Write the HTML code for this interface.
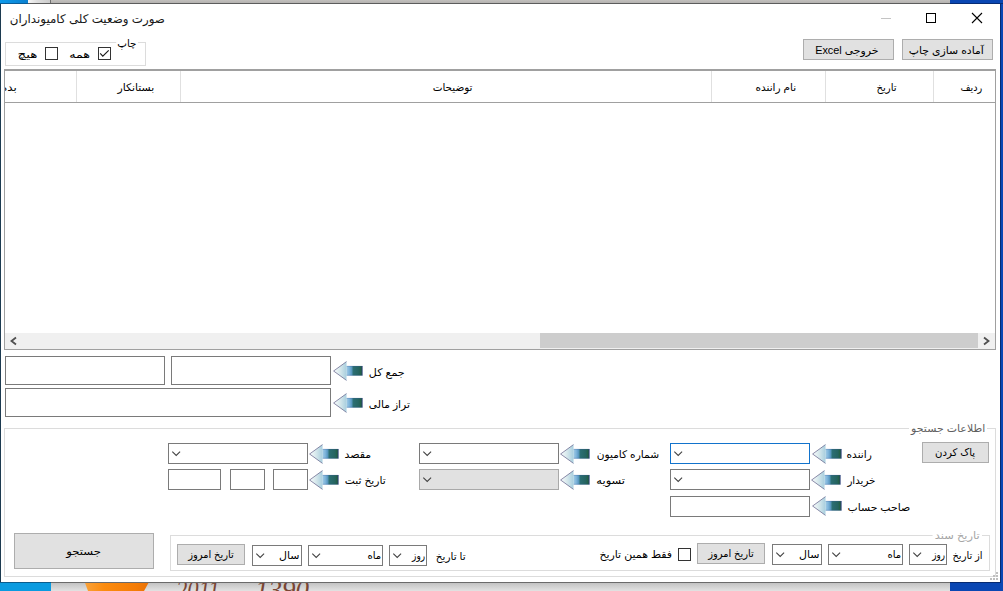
<!DOCTYPE html>
<html lang="fa">
<head>
<meta charset="utf-8">
<title>صورت وضعیت کلی کامیونداران</title>
<style>
html,body{margin:0;padding:0;}
body{width:1003px;height:591px;overflow:hidden;position:relative;background:#0a47b3;font-family:"Liberation Sans","DejaVu Sans",sans-serif;font-size:10.4px;color:#000;}
.a{position:absolute;box-sizing:border-box;}
.t{position:absolute;white-space:nowrap;direction:rtl;line-height:14px;height:14px;text-align:right;transform-origin:100% 50%;}
.tc{position:absolute;white-space:nowrap;direction:rtl;line-height:14px;height:14px;}
.btn{position:absolute;box-sizing:border-box;background:#e1e1e1;border:1px solid #adadad;}
.tb{position:absolute;box-sizing:border-box;background:#fff;border:1px solid #7a7a7a;}
.gb{position:absolute;box-sizing:border-box;border:1px solid #dcdcdc;}
.cb{position:absolute;box-sizing:border-box;width:13px;height:13px;background:#fff;border:1px solid #333;}
.sep{position:absolute;width:1px;background:#e0e0e0;top:71px;height:31px;}
svg{position:absolute;overflow:visible;}
</style>
</head>
<body>
<!-- desktop behind the window -->
<div class="a" id="dtl" style="left:0;top:0;width:28px;height:3px;background:linear-gradient(90deg,#0e9aea,#0a80d0);"></div>
<div class="a" id="dtg1" style="left:28px;top:0;width:23px;height:3px;background:linear-gradient(90deg,#f6f6f6,#dedede 40%,#cacaca);"></div>
<div class="a" id="dtg2" style="left:50px;top:0;width:900px;height:3px;background:linear-gradient(#c2c0bd,#b4b2b0);border-left:1px solid #707070;"></div>
<div class="a" id="dtline" style="left:0;top:3px;width:950px;height:1px;background:linear-gradient(90deg,#0b5c96 0,#0b5c96 28px,#5c5c5c 28px);"></div>
<div class="a" id="dtr" style="left:950px;top:0;width:53px;height:3px;background:#0a47b3;"></div>
<div class="a" style="left:950px;top:3px;width:53px;height:1px;background:#062c74;"></div>

<div class="a" id="dbl" style="left:0;top:582px;width:51px;height:9px;background:#0a9be0;"></div>
<div class="a" id="dbg" style="left:51px;top:582px;width:899px;height:9px;background:linear-gradient(#bcbcbc,#c6c6c6 20%,#e2e2e2);overflow:hidden;">
  <svg width="70" height="9" style="left:33px;top:0"><linearGradient id="og" x1="0" x2="1" y1="0" y2="0"><stop offset="0" stop-color="#f9a23a"/><stop offset="0.3" stop-color="#fb8c10"/><stop offset="0.8" stop-color="#f47c06"/><stop offset="1" stop-color="#e87208"/></linearGradient><polygon points="0.7,0 65,0 60,9 4,9" fill="url(#og)"/></svg>
  <div class="a" style="left:125px;top:-5px;font:italic 27px/27px 'Liberation Serif',serif;color:#7a4634;white-space:nowrap;transform:scaleX(0.84);transform-origin:0 50%;">2011</div>
  <div class="a" style="left:204px;top:-5px;font:italic 27px/27px 'Liberation Serif',serif;color:#7a4634;white-space:nowrap;transform:scaleX(1.0);transform-origin:0 50%;">1390</div>
</div>

<!-- window -->
<div class="a" id="win" style="left:0;top:4px;width:1000px;height:578px;background:#fff;border-left:1px solid #1c3a50;"></div>
<div class="a" style="left:1000px;top:3px;width:1px;height:580px;background:#062c74;"></div>
<div class="a" style="left:0;top:582px;width:1001px;height:1px;background:linear-gradient(90deg,#0a5c8c 0,#0a5c8c 51px,#6a6a6a 51px,#6a6a6a 950px,#062a70 950px);"></div>

<!-- title bar -->
<div class="a" style="left:881px;top:18px;width:10px;height:1px;background:#c4c4c4;"></div>
<div class="a" style="left:926px;top:13px;width:10px;height:10px;border:1px solid #000;"></div>
<svg width="10" height="10" style="left:972px;top:13px"><path d="M0,0 L10,10 M10,0 L0,10" stroke="#000" stroke-width="1.1" fill="none"/></svg>

<!-- top buttons -->
<div class="btn" id="bexcel" style="left:803px;top:39px;width:91px;height:21px;"></div>
<div class="btn" id="bprint" style="left:902px;top:39px;width:91px;height:21px;"></div>

<!-- print group -->
<div class="gb" id="gprint" style="left:5px;top:42px;width:141px;height:24px;"></div>
<div class="cb" style="left:98px;top:47px;"></div>
<svg width="13" height="13" style="left:98px;top:47px"><path d="M2.2,6.3 L4.8,9.1 L10.7,3.4" stroke="#1a1a1a" stroke-width="1.15" fill="none"/></svg>
<div class="cb" style="left:45px;top:47px;"></div>

<!-- grid -->
<div class="a" id="grid" style="left:4px;top:69px;width:992px;height:281px;border:1px solid #a0a0a0;border-top:2px solid #a0a0a0;background:#fff;"></div>
<div class="a" style="left:5px;top:102px;width:990px;height:1px;background:#a0a0a0;"></div>
<div class="sep" style="left:76px;"></div>
<div class="sep" style="left:180px;"></div>
<div class="sep" style="left:711px;"></div>
<div class="sep" style="left:825px;"></div>
<div class="sep" style="left:933px;"></div>
<div class="a" style="left:5px;top:72px;width:13px;height:30px;overflow:hidden;"><div class="tc" style="right:1px;top:8.5px;transform:scaleX(1.15);transform-origin:100% 50%;">بده</div></div>
<!-- scrollbar -->
<div class="a" id="sb" style="left:5px;top:333px;width:990px;height:16px;background:#f0f0f0;"></div>
<div class="a" id="thumb" style="left:540px;top:333px;width:438px;height:15px;background:#cdcdcd;"></div>
<svg width="7" height="8" style="left:10px;top:336.5px"><path d="M6,0.5 L1.5,4 L6,7.5" stroke="#505050" stroke-width="1.8" fill="none"/></svg>
<svg width="7" height="8" style="left:983.4px;top:336.5px"><path d="M1,0.5 L5.5,4 L1,7.5" stroke="#505050" stroke-width="1.8" fill="none"/></svg>

<!-- totals -->
<div class="tb" style="left:5px;top:356px;width:160px;height:29px;"></div>
<div class="tb" style="left:171px;top:356px;width:160px;height:29px;"></div>
<div class="tb" style="left:5px;top:388px;width:326px;height:29px;"></div>

<!-- search group -->
<div class="gb" id="gsearch" style="left:4px;top:428px;width:992px;height:149px;"></div>
<div class="btn" style="left:922px;top:442px;width:67px;height:21px;"></div>

<div class="tb" style="left:670px;top:443px;width:140px;height:21px;border-color:#1273cc;"></div>
<div class="tb" style="left:670px;top:469px;width:140px;height:21px;"></div>
<div class="tb" style="left:670px;top:496px;width:140px;height:21px;"></div>

<div class="tb" style="left:419px;top:443px;width:140px;height:21px;"></div>
<div class="tb" style="left:419px;top:469px;width:140px;height:21px;background:#e1e1e1;border-color:#a9a9a9;"></div>

<div class="tb" style="left:168px;top:443px;width:140px;height:21px;"></div>
<div class="tb" style="left:168px;top:469px;width:53px;height:21px;"></div>
<div class="tb" style="left:230px;top:469px;width:35px;height:21px;"></div>
<div class="tb" style="left:273px;top:469px;width:35px;height:21px;"></div>

<!-- date group -->
<div class="gb" id="gdate" style="left:170px;top:535px;width:820px;height:36px;"></div>
<div class="tb" style="left:909px;top:544px;width:38px;height:21px;"></div>
<div class="tb" style="left:828px;top:544px;width:75px;height:21px;"></div>
<div class="tb" style="left:772px;top:544px;width:50px;height:21px;"></div>
<div class="btn" style="left:697px;top:543px;width:68px;height:21px;"></div>
<div class="cb" style="left:678px;top:548px;"></div>

<div class="tb" style="left:389px;top:545px;width:38px;height:21px;"></div>
<div class="tb" style="left:308px;top:545px;width:75px;height:21px;"></div>
<div class="tb" style="left:252px;top:545px;width:50px;height:21px;"></div>
<div class="btn" style="left:177px;top:544px;width:68px;height:21px;"></div>

<div class="btn" id="bsearch" style="left:14px;top:533px;width:140px;height:36px;"></div>

<div class="t" style="right:838.5px;top:10.8px;transform:scaleX(0.989);font-size:12px;line-height:16px;height:16px;color:#181818;">صورت وضعیت کلی کامیونداران</div>
<div class="t" style="right:124.0px;top:43.5px;transform:scaleX(1.047);">خروجی Excel</div>
<div class="t" style="right:19.0px;top:43.5px;transform:scaleX(1.046);">آماده سازی چاپ</div>
<div class="t" style="right:864.6px;top:37px;transform:scaleX(0.991);background:#fff;padding:0 2px 0 1px;">چاپ</div>
<div class="t" style="right:913.3px;top:47.5px;transform:scaleX(1.225);">همه</div>
<div class="t" style="right:966.1px;top:47.5px;transform:scaleX(1.298);">هیچ</div>
<div class="t" style="right:20.9px;top:80.5px;transform:scaleX(0.940);">ردیف</div>
<div class="t" style="right:106.6px;top:80.5px;transform:scaleX(0.976);">تاریخ</div>
<div class="t" style="right:206.9px;top:80.5px;transform:scaleX(1.014);">نام راننده</div>
<div class="t" style="right:530.5px;top:80.5px;">توضیحات</div>
<div class="t" style="right:848.5px;top:80.5px;transform:scaleX(1.046);">بستانکار</div>
<div class="t" style="right:598.3px;top:366px;transform:scaleX(1.066);">جمع کل</div>
<div class="t" style="right:593.0px;top:398.2px;transform:scaleX(1.030);">تراز مالی</div>
<div class="t" style="right:15.3px;top:422px;transform:scaleX(1.054);background:#fff;padding:0 2px;color:#5f5f5f;">اطلاعات جستجو</div>
<div class="t" style="right:27.8px;top:445.8px;transform:scaleX(0.976);">پاک کردن</div>
<div class="t" style="right:131.0px;top:447.5px;transform:scaleX(1.018);">راننده</div>
<div class="t" style="right:128.0px;top:473.5px;transform:scaleX(0.985);">خریدار</div>
<div class="t" style="right:92.4px;top:500.5px;transform:scaleX(1.041);">صاحب حساب</div>
<div class="t" style="right:344.3px;top:447.5px;transform:scaleX(1.022);">شماره کامیون</div>
<div class="t" style="right:378.0px;top:473.5px;transform:scaleX(1.104);">تسویه</div>
<div class="t" style="right:631.4px;top:447.6px;transform:scaleX(1.063);">مقصد</div>
<div class="t" style="right:617.2px;top:473.7px;transform:scaleX(1.033);">تاریخ ثبت</div>
<div class="t" style="right:20.8px;top:528.5px;transform:scaleX(1.099);background:#fff;padding:0 2px;color:#a6a6a6;">تاریخ سند</div>
<div class="t" style="right:20.8px;top:548.8px;transform:scaleX(0.953);">از تاریخ</div>
<div class="t" style="right:58.4px;top:548px;transform:scaleX(0.843);">روز</div>
<div class="t" style="right:102.1px;top:548px;transform:scaleX(0.973);">ماه</div>
<div class="t" style="right:183.2px;top:548px;transform:scaleX(1.056);">سال</div>
<div class="t" style="right:249.4px;top:547px;transform:scaleX(0.954);">تاریخ امروز</div>
<div class="t" style="right:330.8px;top:548px;transform:scaleX(1.052);">فقط همین تاریخ</div>
<div class="t" style="right:537.0px;top:549.8px;transform:scaleX(1.006);">تا تاریخ</div>
<div class="t" style="right:577.8px;top:549px;transform:scaleX(0.863);">روز</div>
<div class="t" style="right:621.9px;top:549px;transform:scaleX(0.973);">ماه</div>
<div class="t" style="right:703.2px;top:549px;transform:scaleX(1.056);">سال</div>
<div class="t" style="right:769.4px;top:548px;transform:scaleX(0.954);">تاریخ امروز</div>
<div class="t" style="right:902.3px;top:545px;transform:scaleX(1.123);">جستجو</div>
<svg width="30" height="20" viewBox="0 0 30 20" style="left:332.8px;top:361px"><linearGradient id="h0" x1="0" x2="1" y1="0" y2="0"><stop offset="0" stop-color="#fafcfc"/><stop offset="0.5" stop-color="#d6e8ec"/><stop offset="1" stop-color="#a8cede"/></linearGradient><linearGradient id="s0" x1="0" x2="1" y1="0" y2="0"><stop offset="0" stop-color="#a2cce6"/><stop offset="0.2" stop-color="#78b0d8"/><stop offset="0.32" stop-color="#5a98c0"/><stop offset="0.38" stop-color="#3f8294"/><stop offset="0.44" stop-color="#2b6e72"/><stop offset="0.78" stop-color="#256460"/><stop offset="0.88" stop-color="#236248"/><stop offset="0.94" stop-color="#244e58"/><stop offset="1" stop-color="#2c3e7c"/></linearGradient><rect x="13.4" y="5" width="16.2" height="9.6" fill="url(#s0)"/><path d="M13.4,5.3 H29.4 M13.4,14.3 H29.4" stroke="#3c5c9c" stroke-width="0.7" opacity="0.45" fill="none"/><polygon points="0.6,10 13.5,0.6 13.5,19.4" fill="url(#h0)"/><path d="M13.5,0.6 L0.6,10 L13.5,19.4" stroke="#68688e" stroke-width="0.85" stroke-opacity="0.9" fill="none"/></svg>
<svg width="30" height="20" viewBox="0 0 30 20" style="left:332.8px;top:393px"><linearGradient id="h1" x1="0" x2="1" y1="0" y2="0"><stop offset="0" stop-color="#fafcfc"/><stop offset="0.5" stop-color="#d6e8ec"/><stop offset="1" stop-color="#a8cede"/></linearGradient><linearGradient id="s1" x1="0" x2="1" y1="0" y2="0"><stop offset="0" stop-color="#a2cce6"/><stop offset="0.2" stop-color="#78b0d8"/><stop offset="0.32" stop-color="#5a98c0"/><stop offset="0.38" stop-color="#3f8294"/><stop offset="0.44" stop-color="#2b6e72"/><stop offset="0.78" stop-color="#256460"/><stop offset="0.88" stop-color="#236248"/><stop offset="0.94" stop-color="#244e58"/><stop offset="1" stop-color="#2c3e7c"/></linearGradient><rect x="13.4" y="5" width="16.2" height="9.6" fill="url(#s1)"/><path d="M13.4,5.3 H29.4 M13.4,14.3 H29.4" stroke="#3c5c9c" stroke-width="0.7" opacity="0.45" fill="none"/><polygon points="0.6,10 13.5,0.6 13.5,19.4" fill="url(#h1)"/><path d="M13.5,0.6 L0.6,10 L13.5,19.4" stroke="#68688e" stroke-width="0.85" stroke-opacity="0.9" fill="none"/></svg>
<svg width="30" height="20" viewBox="0 0 30 20" style="left:811.7px;top:444px"><linearGradient id="h2" x1="0" x2="1" y1="0" y2="0"><stop offset="0" stop-color="#fafcfc"/><stop offset="0.5" stop-color="#d6e8ec"/><stop offset="1" stop-color="#a8cede"/></linearGradient><linearGradient id="s2" x1="0" x2="1" y1="0" y2="0"><stop offset="0" stop-color="#a2cce6"/><stop offset="0.2" stop-color="#78b0d8"/><stop offset="0.32" stop-color="#5a98c0"/><stop offset="0.38" stop-color="#3f8294"/><stop offset="0.44" stop-color="#2b6e72"/><stop offset="0.78" stop-color="#256460"/><stop offset="0.88" stop-color="#236248"/><stop offset="0.94" stop-color="#244e58"/><stop offset="1" stop-color="#2c3e7c"/></linearGradient><rect x="13.4" y="5" width="16.2" height="9.6" fill="url(#s2)"/><path d="M13.4,5.3 H29.4 M13.4,14.3 H29.4" stroke="#3c5c9c" stroke-width="0.7" opacity="0.45" fill="none"/><polygon points="0.6,10 13.5,0.6 13.5,19.4" fill="url(#h2)"/><path d="M13.5,0.6 L0.6,10 L13.5,19.4" stroke="#68688e" stroke-width="0.85" stroke-opacity="0.9" fill="none"/></svg>
<svg width="30" height="20" viewBox="0 0 30 20" style="left:811.0px;top:470px"><linearGradient id="h3" x1="0" x2="1" y1="0" y2="0"><stop offset="0" stop-color="#fafcfc"/><stop offset="0.5" stop-color="#d6e8ec"/><stop offset="1" stop-color="#a8cede"/></linearGradient><linearGradient id="s3" x1="0" x2="1" y1="0" y2="0"><stop offset="0" stop-color="#a2cce6"/><stop offset="0.2" stop-color="#78b0d8"/><stop offset="0.32" stop-color="#5a98c0"/><stop offset="0.38" stop-color="#3f8294"/><stop offset="0.44" stop-color="#2b6e72"/><stop offset="0.78" stop-color="#256460"/><stop offset="0.88" stop-color="#236248"/><stop offset="0.94" stop-color="#244e58"/><stop offset="1" stop-color="#2c3e7c"/></linearGradient><rect x="13.4" y="5" width="16.2" height="9.6" fill="url(#s3)"/><path d="M13.4,5.3 H29.4 M13.4,14.3 H29.4" stroke="#3c5c9c" stroke-width="0.7" opacity="0.45" fill="none"/><polygon points="0.6,10 13.5,0.6 13.5,19.4" fill="url(#h3)"/><path d="M13.5,0.6 L0.6,10 L13.5,19.4" stroke="#68688e" stroke-width="0.85" stroke-opacity="0.9" fill="none"/></svg>
<svg width="30" height="20" viewBox="0 0 30 20" style="left:811.7px;top:496px"><linearGradient id="h4" x1="0" x2="1" y1="0" y2="0"><stop offset="0" stop-color="#fafcfc"/><stop offset="0.5" stop-color="#d6e8ec"/><stop offset="1" stop-color="#a8cede"/></linearGradient><linearGradient id="s4" x1="0" x2="1" y1="0" y2="0"><stop offset="0" stop-color="#a2cce6"/><stop offset="0.2" stop-color="#78b0d8"/><stop offset="0.32" stop-color="#5a98c0"/><stop offset="0.38" stop-color="#3f8294"/><stop offset="0.44" stop-color="#2b6e72"/><stop offset="0.78" stop-color="#256460"/><stop offset="0.88" stop-color="#236248"/><stop offset="0.94" stop-color="#244e58"/><stop offset="1" stop-color="#2c3e7c"/></linearGradient><rect x="13.4" y="5" width="16.2" height="9.6" fill="url(#s4)"/><path d="M13.4,5.3 H29.4 M13.4,14.3 H29.4" stroke="#3c5c9c" stroke-width="0.7" opacity="0.45" fill="none"/><polygon points="0.6,10 13.5,0.6 13.5,19.4" fill="url(#h4)"/><path d="M13.5,0.6 L0.6,10 L13.5,19.4" stroke="#68688e" stroke-width="0.85" stroke-opacity="0.9" fill="none"/></svg>
<svg width="30" height="20" viewBox="0 0 30 20" style="left:559.8px;top:444px"><linearGradient id="h5" x1="0" x2="1" y1="0" y2="0"><stop offset="0" stop-color="#fafcfc"/><stop offset="0.5" stop-color="#d6e8ec"/><stop offset="1" stop-color="#a8cede"/></linearGradient><linearGradient id="s5" x1="0" x2="1" y1="0" y2="0"><stop offset="0" stop-color="#a2cce6"/><stop offset="0.2" stop-color="#78b0d8"/><stop offset="0.32" stop-color="#5a98c0"/><stop offset="0.38" stop-color="#3f8294"/><stop offset="0.44" stop-color="#2b6e72"/><stop offset="0.78" stop-color="#256460"/><stop offset="0.88" stop-color="#236248"/><stop offset="0.94" stop-color="#244e58"/><stop offset="1" stop-color="#2c3e7c"/></linearGradient><rect x="13.4" y="5" width="16.2" height="9.6" fill="url(#s5)"/><path d="M13.4,5.3 H29.4 M13.4,14.3 H29.4" stroke="#3c5c9c" stroke-width="0.7" opacity="0.45" fill="none"/><polygon points="0.6,10 13.5,0.6 13.5,19.4" fill="url(#h5)"/><path d="M13.5,0.6 L0.6,10 L13.5,19.4" stroke="#68688e" stroke-width="0.85" stroke-opacity="0.9" fill="none"/></svg>
<svg width="30" height="20" viewBox="0 0 30 20" style="left:559.8px;top:470px"><linearGradient id="h6" x1="0" x2="1" y1="0" y2="0"><stop offset="0" stop-color="#fafcfc"/><stop offset="0.5" stop-color="#d6e8ec"/><stop offset="1" stop-color="#a8cede"/></linearGradient><linearGradient id="s6" x1="0" x2="1" y1="0" y2="0"><stop offset="0" stop-color="#a2cce6"/><stop offset="0.2" stop-color="#78b0d8"/><stop offset="0.32" stop-color="#5a98c0"/><stop offset="0.38" stop-color="#3f8294"/><stop offset="0.44" stop-color="#2b6e72"/><stop offset="0.78" stop-color="#256460"/><stop offset="0.88" stop-color="#236248"/><stop offset="0.94" stop-color="#244e58"/><stop offset="1" stop-color="#2c3e7c"/></linearGradient><rect x="13.4" y="5" width="16.2" height="9.6" fill="url(#s6)"/><path d="M13.4,5.3 H29.4 M13.4,14.3 H29.4" stroke="#3c5c9c" stroke-width="0.7" opacity="0.45" fill="none"/><polygon points="0.6,10 13.5,0.6 13.5,19.4" fill="url(#h6)"/><path d="M13.5,0.6 L0.6,10 L13.5,19.4" stroke="#68688e" stroke-width="0.85" stroke-opacity="0.9" fill="none"/></svg>
<svg width="30" height="20" viewBox="0 0 30 20" style="left:309.1px;top:444px"><linearGradient id="h7" x1="0" x2="1" y1="0" y2="0"><stop offset="0" stop-color="#fafcfc"/><stop offset="0.5" stop-color="#d6e8ec"/><stop offset="1" stop-color="#a8cede"/></linearGradient><linearGradient id="s7" x1="0" x2="1" y1="0" y2="0"><stop offset="0" stop-color="#a2cce6"/><stop offset="0.2" stop-color="#78b0d8"/><stop offset="0.32" stop-color="#5a98c0"/><stop offset="0.38" stop-color="#3f8294"/><stop offset="0.44" stop-color="#2b6e72"/><stop offset="0.78" stop-color="#256460"/><stop offset="0.88" stop-color="#236248"/><stop offset="0.94" stop-color="#244e58"/><stop offset="1" stop-color="#2c3e7c"/></linearGradient><rect x="13.4" y="5" width="16.2" height="9.6" fill="url(#s7)"/><path d="M13.4,5.3 H29.4 M13.4,14.3 H29.4" stroke="#3c5c9c" stroke-width="0.7" opacity="0.45" fill="none"/><polygon points="0.6,10 13.5,0.6 13.5,19.4" fill="url(#h7)"/><path d="M13.5,0.6 L0.6,10 L13.5,19.4" stroke="#68688e" stroke-width="0.85" stroke-opacity="0.9" fill="none"/></svg>
<svg width="30" height="20" viewBox="0 0 30 20" style="left:309.1px;top:470px"><linearGradient id="h8" x1="0" x2="1" y1="0" y2="0"><stop offset="0" stop-color="#fafcfc"/><stop offset="0.5" stop-color="#d6e8ec"/><stop offset="1" stop-color="#a8cede"/></linearGradient><linearGradient id="s8" x1="0" x2="1" y1="0" y2="0"><stop offset="0" stop-color="#a2cce6"/><stop offset="0.2" stop-color="#78b0d8"/><stop offset="0.32" stop-color="#5a98c0"/><stop offset="0.38" stop-color="#3f8294"/><stop offset="0.44" stop-color="#2b6e72"/><stop offset="0.78" stop-color="#256460"/><stop offset="0.88" stop-color="#236248"/><stop offset="0.94" stop-color="#244e58"/><stop offset="1" stop-color="#2c3e7c"/></linearGradient><rect x="13.4" y="5" width="16.2" height="9.6" fill="url(#s8)"/><path d="M13.4,5.3 H29.4 M13.4,14.3 H29.4" stroke="#3c5c9c" stroke-width="0.7" opacity="0.45" fill="none"/><polygon points="0.6,10 13.5,0.6 13.5,19.4" fill="url(#h8)"/><path d="M13.5,0.6 L0.6,10 L13.5,19.4" stroke="#68688e" stroke-width="0.85" stroke-opacity="0.9" fill="none"/></svg>
<svg width="10" height="6" style="left:674px;top:451.4px"><path d="M0.3,0.6 L4.2,4.4 L8.1,0.6" stroke="#404040" stroke-width="1.05" fill="none"/></svg>
<svg width="10" height="6" style="left:674px;top:477.4px"><path d="M0.3,0.6 L4.2,4.4 L8.1,0.6" stroke="#404040" stroke-width="1.05" fill="none"/></svg>
<svg width="10" height="6" style="left:423px;top:451.4px"><path d="M0.3,0.6 L4.2,4.4 L8.1,0.6" stroke="#404040" stroke-width="1.05" fill="none"/></svg>
<svg width="10" height="6" style="left:423px;top:477.4px"><path d="M0.3,0.6 L4.2,4.4 L8.1,0.6" stroke="#404040" stroke-width="1.05" fill="none"/></svg>
<svg width="10" height="6" style="left:172px;top:451.4px"><path d="M0.3,0.6 L4.2,4.4 L8.1,0.6" stroke="#404040" stroke-width="1.05" fill="none"/></svg>
<svg width="10" height="6" style="left:913px;top:552.4px"><path d="M0.3,0.6 L4.2,4.4 L8.1,0.6" stroke="#404040" stroke-width="1.05" fill="none"/></svg>
<svg width="10" height="6" style="left:832px;top:552.4px"><path d="M0.3,0.6 L4.2,4.4 L8.1,0.6" stroke="#404040" stroke-width="1.05" fill="none"/></svg>
<svg width="10" height="6" style="left:776px;top:552.4px"><path d="M0.3,0.6 L4.2,4.4 L8.1,0.6" stroke="#404040" stroke-width="1.05" fill="none"/></svg>
<svg width="10" height="6" style="left:393px;top:553.4px"><path d="M0.3,0.6 L4.2,4.4 L8.1,0.6" stroke="#404040" stroke-width="1.05" fill="none"/></svg>
<svg width="10" height="6" style="left:312px;top:553.4px"><path d="M0.3,0.6 L4.2,4.4 L8.1,0.6" stroke="#404040" stroke-width="1.05" fill="none"/></svg>
<svg width="10" height="6" style="left:256px;top:553.4px"><path d="M0.3,0.6 L4.2,4.4 L8.1,0.6" stroke="#404040" stroke-width="1.05" fill="none"/></svg>
<!-- size grip -->
<svg width="9" height="9" style="left:990px;top:572px" fill="#bfbfbf"><rect x="6" y="0" width="2" height="2"/><rect x="3" y="3" width="2" height="2"/><rect x="6" y="3" width="2" height="2"/><rect x="0" y="6" width="2" height="2"/><rect x="3" y="6" width="2" height="2"/><rect x="6" y="6" width="2" height="2"/></svg>
</body>
</html>
